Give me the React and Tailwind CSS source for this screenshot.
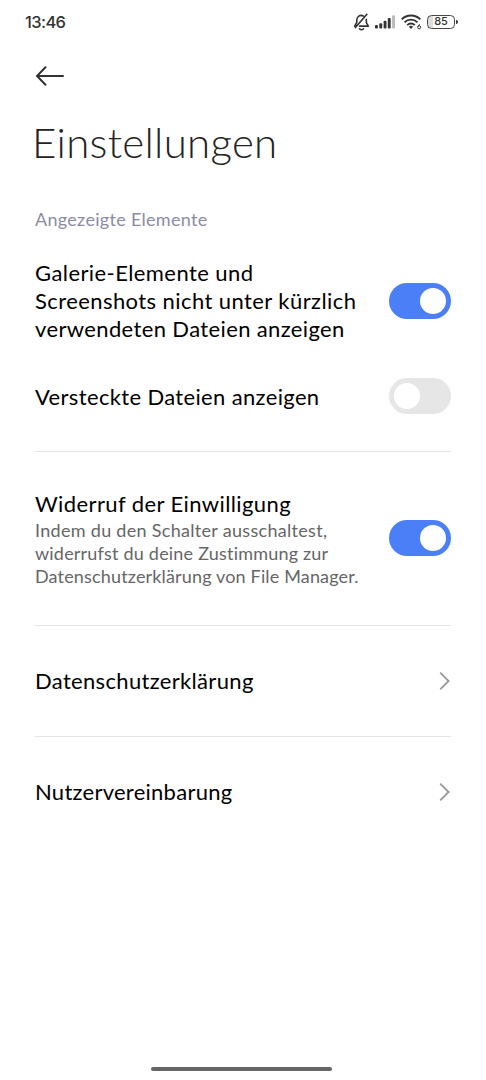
import { useState } from 'react';

function Toggle({ checked, onChange, label }) {
  return (
    <button
      role="switch"
      aria-checked={checked}
      aria-label={label}
      onClick={() => onChange(!checked)}
      className={`flex items-center shrink-0 w-[62px] h-[36px] -mt-px rounded-full ${checked ? 'bg-[#4a7ff7] justify-end pr-[5px]' : 'bg-[#e6e6e6] justify-start pl-[5px]'}`}
    >
      <span className="w-[26px] h-[26px] rounded-full bg-white" />
    </button>
  );
}

function StatusBar() {
  return (
    <div className="flex justify-between items-start h-[43px] pl-[25px] pr-[28px] text-[#333]">
      <span className="mt-[11px] text-[16.5px] leading-[22px] font-medium font-[Inter,sans-serif] tracking-[-0.6px]">13:46</span>
      <div className="flex items-center h-[43px] gap-[5px]">
        {/* Muted bell */}
        <svg width="17" height="18" viewBox="0 0 17 18" fill="none" stroke="#333" strokeWidth="1.6" strokeLinecap="round" strokeLinejoin="round">
          <path d="M10.3 2.9C7 1.4 3.9 3.6 3.8 7L3.7 9.8 1.6 13.1h1.6M6.5 13.1h8.9l-2-3.2-.1-3.6M2.4 14.6 13.9 1.3" />
          <path d="M6.6 15.9c1 .9 2.8.9 3.8 0" />
        </svg>
        {/* Signal */}
        <svg className="mr-px" width="20" height="14" viewBox="0 0 20 14" fill="#333">
          <rect x="0" y="10" width="2.9" height="3.5" rx="1" />
          <rect x="4.3" y="8.3" width="2.9" height="5.2" rx="1" />
          <rect x="8.6" y="5.8" width="2.9" height="7.7" rx="1" />
          <rect x="12.8" y="3" width="2.9" height="10.5" rx="1" />
          <rect x="17.1" y="0.3" width="2.9" height="13.2" rx="1" fill="#bbb" />
        </svg>
        {/* Wi-Fi 6 */}
        <svg width="21" height="16" viewBox="0 0 21 16" fill="none" stroke="#333" strokeWidth="1.9">
          <path d="M.7 5.3a13.2 13.2 0 0 1 18.6 0M3.5 8.3a9.2 9.2 0 0 1 13 0M6.2 11.1a5.4 5.4 0 0 1 7.6 0" />
          <path d="M7.9 12.8a3 3 0 0 1 4.2 0L10 15.1z" fill="#333" stroke="none" />
          <circle cx="18.2" cy="13.3" r="1.5" strokeWidth="1" />
          <path d="M18.6 10.2 17 12.6" strokeWidth="1" />
        </svg>
        <div className="flex items-center gap-px">
          <span className="flex items-center justify-center w-[28px] h-[14px] rounded-[4.5px] border-[1.5px] border-[#444] bg-linear-to-r from-[#ddd] from-20% to-white to-20% text-[11px] leading-none font-medium font-[Inter,sans-serif]">85</span>
          <span className="w-[2px] h-[4px] rounded-r bg-[#333]" />
        </div>
      </div>
    </div>
  );
}

function LinkRow({ children }) {
  return (
    <a href="#" className="flex items-center justify-between h-[110px]">
      {children}
      <svg width="12" height="20" viewBox="0 0 12 20" fill="none" stroke="#999" strokeWidth="1.8">
        <path d="M1.2 1.7 9.6 10l-8.4 8.3" />
      </svg>
    </a>
  );
}

function Divider() {
  return <div className="h-px bg-[#e6e6e6]" />;
}

export default function App() {
  const [hideMedia, setHideMedia] = useState(true);
  const [showHidden, setShowHidden] = useState(false);
  const [consent, setConsent] = useState(true);

  return (
    <div className="flex flex-col w-[486px] h-[1080px] bg-white text-black overflow-hidden font-[Lato,sans-serif]">
      <StatusBar />
      <div className="grow px-[35px]">
        <button aria-label="Zurück" className="flex items-center h-[65px]">
          <svg width="30" height="22" viewBox="0 0 30 22" fill="none" stroke="#333" strokeWidth="2" strokeLinecap="round">
            <path d="M28 11H2M10.5 2.2 2 11l8.5 8.8" />
          </svg>
        </button>
        <h1 className="-ml-[3px] h-[91px] text-[42px] leading-[68px] font-light tracking-[0.3px] text-[#222]">Einstellungen</h1>
        <h2 className="text-[18px] leading-[40px] tracking-[0.3px] text-[#8d8ba3]">Angezeigte Elemente</h2>

        <div className="flex items-center justify-between h-[124px] text-[22px] leading-[28.3px]">
          <div>
            <div className="tracking-[0.42px]">Galerie-Elemente und</div>
            <div className="tracking-[0.42px]">Screenshots nicht unter kürzlich</div>
            <div className="tracking-[0.37px]">verwendeten Dateien anzeigen</div>
          </div>
          <Toggle checked={hideMedia} onChange={setHideMedia} label="Galerie-Elemente nicht anzeigen" />
        </div>
        <div className="flex items-center justify-between h-[67px] mb-[21px]">
          <span className="text-[22px] leading-[28px] tracking-[0.35px]">Versteckte Dateien anzeigen</span>
          <Toggle checked={showHidden} onChange={setShowHidden} label="Versteckte Dateien anzeigen" />
        </div>
        <Divider />

        <div className="flex items-center justify-between h-[173px]">
          <div>
            <div className="text-[22px] leading-[27px] pb-[2px] tracking-[0.4px]">Widerruf der Einwilligung</div>
            <div className="text-[18px] leading-[23px] text-[#666]">
              <div className="tracking-[0.3px]">Indem du den Schalter ausschaltest,</div>
              <div className="tracking-[0.2px]">widerrufst du deine Zustimmung zur</div>
              <div className="tracking-[0.16px]">Datenschutzerklärung von File Manager.</div>
            </div>
          </div>
          <Toggle checked={consent} onChange={setConsent} label="Widerruf der Einwilligung" />
        </div>
        <Divider />

        <LinkRow>
          <span className="pb-[2px] text-[22px] tracking-[0.33px]">Datenschutzerklärung</span>
        </LinkRow>
        <Divider />
        <LinkRow>
          <span className="pb-[2px] text-[22px] tracking-[0.26px]">Nutzervereinbarung</span>
        </LinkRow>
      </div>

      {/* Gesture bar */}
      <div className="shrink-0 w-[181px] h-[4px] ml-[151px] mb-[9px] rounded-full bg-[#666]" />
    </div>
  );
}
